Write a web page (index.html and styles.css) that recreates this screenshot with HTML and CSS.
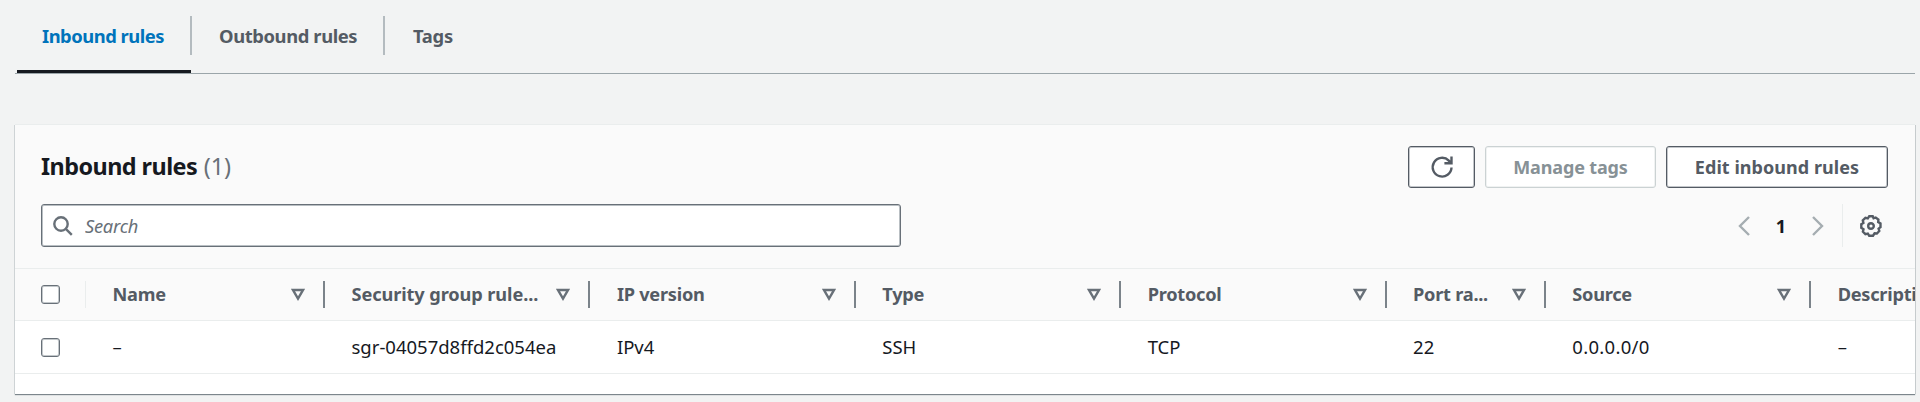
FILE: index.html
```html
<!DOCTYPE html>
<html lang="en">
<head>
<meta charset="utf-8" />
<title>Security group - Inbound rules</title>
<link rel="stylesheet" href="styles.css">
</head>

<body>
<ul class="tabs">
  <li class="tab active"><a class="tab-inbound">Inbound rules</a></li>
  <li class="tab"><a class="tab-outbound">Outbound rules</a></li>
  <li class="tab"><a class="tab-tags">Tags</a></li>
</ul>

<div class="panel">

<div class="panel-header">
<h2>Inbound rules <span class="counter">(1)</span></h2>
<div class="actions">
  <button class="btn btn-icon" aria-label="Refresh">
    <svg width="24" height="24" viewBox="0 0 24 24"><path d="M21.5 12.5A9.4 9.4 0 1 1 18.8 5.6L21 8.1M21.5 1.4V8.3H14.4" /></svg>
  </button>
  <button class="btn btn-tags" disabled>Manage tags</button>
  <button class="btn btn-edit">Edit inbound rules</button>
</div>
</div>

<div class="tools">
<div class="search">
  <svg width="20" height="20" viewBox="0 0 20 20"><circle cx="8" cy="8" r="6.7" /><path d="M12.8 12.8L18.8 18.8" /></svg>
  <input type="text" placeholder="Search" />
</div>
<div class="pagination">
  <svg class="arrow" width="12" height="20" viewBox="0 0 12 20"><path d="M11 1L2 10L11 19" /></svg>
  <span class="page">1</span>
  <svg class="arrow" width="12" height="20" viewBox="0 0 12 20"><path d="M1 1L10 10L1 19" /></svg>
</div>
<div class="settings">
  <svg width="22" height="22" viewBox="0 0 22 22"><path d="M9.3 1.2H12.7L13.6 3.3L15.7 2.5L18.4 4.6L18.2 7L20.5 8.4V12.2L18.6 13.6L19.3 16L16.9 18.5L14.6 18.3L13 20.7H9.2L7.8 18.6L5.4 19.1L2.9 16.7L3.5 14.2L1.3 12.8V9.2L3.4 7.9L2.8 5.3L5.4 2.9L7.8 3.5Z" /><circle cx="11" cy="11" r="2.8" /></svg>
</div>
</div>

<div class="table-wrap">
<table>
<thead>
<tr>
<th class="col-check"><input type="checkbox" /></th>
<th class="col-name"><div><span>Name</span><svg class="sort" width="14" height="13" viewBox="0 0 14 13"><path d="M2 2H12L7 10.6Z" /></svg></div></th>
<th class="col"><div><span class="rule-id">Security group rule...</span><svg class="sort" width="14" height="13" viewBox="0 0 14 13"><path d="M2 2H12L7 10.6Z" /></svg></div></th>
<th class="col"><div><span>IP version</span><svg class="sort" width="14" height="13" viewBox="0 0 14 13"><path d="M2 2H12L7 10.6Z" /></svg></div></th>
<th class="col"><div><span>Type</span><svg class="sort" width="14" height="13" viewBox="0 0 14 13"><path d="M2 2H12L7 10.6Z" /></svg></div></th>
<th class="col"><div><span>Protocol</span><svg class="sort" width="14" height="13" viewBox="0 0 14 13"><path d="M2 2H12L7 10.6Z" /></svg></div></th>
<th class="col-port"><div><span>Port ra...</span><svg class="sort" width="14" height="13" viewBox="0 0 14 13"><path d="M2 2H12L7 10.6Z" /></svg></div></th>
<th class="col"><div><span>Source</span><svg class="sort" width="14" height="13" viewBox="0 0 14 13"><path d="M2 2H12L7 10.6Z" /></svg></div></th>
<th class="col"><div><span>Description</span></div></th>
</tr>
</thead>
<tbody>
<tr>
<td class="col-check"><input type="checkbox" /></td>
<td>–</td>
<td>sgr-04057d8ffd2c054ea</td>
<td>IPv4</td>
<td>SSH</td>
<td>TCP</td>
<td>22</td>
<td class="cidr">0.0.0.0/0</td>
<td>–</td>
</tr>
</tbody>
</table>
</div>

</div>
</body>
</html>
```
FILE: styles.css
```css
* {
  box-sizing: border-box;
}

body {
  margin: 0;
  padding: 0 5px 0 15px;
  height: 402px;
  overflow: hidden;
  background: #f2f3f3;
  color: #16191f;
  font-family: "Noto Sans", "Open Sans", sans-serif;
  font-size: 18px;
}

svg {
  display: block;
  fill: none;
  stroke: #545b64;
  stroke-width: 2.4;
}

/* Tabs */
.tabs {
  display: flex;
  margin: 0;
  padding: 0 0 0 2px;
  height: 74px;
  list-style: none;
  border-bottom: 1px solid #9ba5a9;
}

.tab {
  height: 73px;
  padding-top: 16px;
  color: #545b64;
  font-size: 18.4px;
  font-weight: bold;
  letter-spacing: -0.5px;
}

.tab a {
  display: block;
  height: 39px;
  padding-left: 28px;
  line-height: 39px;
  white-space: nowrap;
  border-right: 2px solid #b4bbbf;
}

.tab.active {
  color: #0073bb;
  border-bottom: 3px solid #16191f;
}

.tab.active a {
  padding-left: 25px;
}

.tab-inbound {
  width: 175px;
  margin-right: -1px;
}

.tab-outbound {
  width: 194px;
  letter-spacing: -0.4px;
}

.tab .tab-tags {
  border-right: 0;
  letter-spacing: -0.3px;
}

/* Panel */
.panel {
  height: 269px;
  margin: 51px 0 0 0;
  overflow: hidden;
  background: #fff;
  box-shadow: 0 -1px 0 #eaeded, -1px 0 0 #ced3d5, 1px 0 0 #c6cbcd, 0 1px 1px #7c868c;
}

.panel-header {
  display: flex;
  justify-content: space-between;
  height: 79px;
  padding: 21px 27px 0 26px;
  background: #fafafa;
}

h2 {
  margin: 0;
  font-size: 23.4px;
  line-height: 40px;
  letter-spacing: -0.55px;
}

.counter {
  margin-left: 1px;
  color: #687078;
  font-weight: normal;
  letter-spacing: 0;
}

.actions {
  display: flex;
  gap: 10px;
}

.btn {
  height: 42px;
  padding: 0;
  background: #fff;
  border: 1px solid #545b64;
  border-radius: 3px;
  box-shadow: inset 0 0 0 1px #c3c6ca;
  color: #545b64;
  font-family: inherit;
  font-size: 18px;
  font-weight: bold;
  white-space: nowrap;
}

.btn:disabled {
  border-color: #cbd2d3;
  box-shadow: inset 0 0 0 1px #f0f2f2;
  color: #879196;
}

.btn-icon {
  display: flex;
  align-items: center;
  justify-content: center;
  width: 67px;
}

.btn-tags {
  width: 171px;
  letter-spacing: -0.15px;
}

.btn-edit {
  width: 222px;
  letter-spacing: 0.05px;
}

.tools {
  display: flex;
  height: 64px;
  padding: 0 33px 0 26px;
  background: #fafafa;
}

.search {
  display: flex;
  align-items: center;
  width: 860px;
  height: 43px;
  padding-left: 11px;
  background: #fff;
  border: 1px solid #687078;
  border-radius: 3px;
  box-shadow: inset 0 0 0 1px #b9bfc3;
}

.search svg {
  stroke: #687078;
}

.search input {
  flex: 1;
  height: 36px;
  margin: 0 4px 0 12px;
  padding: 0;
  background: transparent;
  border: 0;
  outline: 0;
  font: italic 18.3px "Noto Sans", "Open Sans", sans-serif;
  letter-spacing: -0.25px;
}

.search input::placeholder {
  color: #687078;
}

.pagination {
  display: flex;
  align-items: center;
  height: 43px;
  margin-left: auto;
}

.arrow {
  stroke: #a5adb1;
}

.page {
  width: 62px;
  text-align: center;
  font-weight: bold;
}

.settings {
  display: flex;
  align-items: center;
  justify-content: flex-end;
  width: 40px;
  height: 43px;
  margin-left: 18px;
  border-left: 1px solid #eaeded;
}

/* Table */
.table-wrap {
  overflow: hidden;
}

table {
  width: 2061px;
  table-layout: fixed;
  border-collapse: separate;
  border-spacing: 0;
}

th, td {
  height: 53px;
  padding: 0 0 0 26.5px;
  text-align: left;
  white-space: nowrap;
}

th {
  background: #fafafa;
  border-top: 1px solid #eaeded;
  border-bottom: 1px solid #eaeded;
  color: #545b64;
}

td {
  padding-bottom: 1px;
  border-bottom: 1px solid #eaeded;
  font-size: 18.5px;
}

th div {
  display: flex;
  align-items: center;
  justify-content: space-between;
  height: 27px;
  padding-right: 18px;
  border-right: 2px solid #7b838a;
}

th span {
  margin-top: -2px;
  font-size: 18.2px;
  letter-spacing: -0.25px;
}

th .rule-id {
  letter-spacing: -0.1px;
}

.sort {
  stroke: #687078;
}

.cidr {
  letter-spacing: 0.3px;
}

th.col-check, td.col-check {
  width: 71px;
  padding: 0 0 0 26px;
}

.col-check input {
  appearance: none;
  display: block;
  width: 19px;
  height: 19px;
  margin: 0;
  background: #fff;
  border: 1px solid #687078;
  border-radius: 3px;
  box-shadow: inset 0 0 0 1px #c3c8cb;
}

/* Faint divider after the select-all checkbox */
th.col-check {
  background: linear-gradient(#eaeded, #eaeded) right center / 1px 27px no-repeat #fafafa;
}

.col-name {
  width: 239px;
}

.col {
  width: 265.4px;
}

.col-port {
  width: 159.2px;
}
```
